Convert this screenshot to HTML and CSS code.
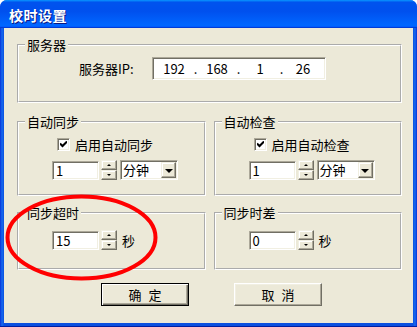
FILE: index.html
```html
<!DOCTYPE html>
<html lang="zh-CN">
<head>
    <meta charset="UTF-8">
    <title>校时设置</title>
    <link rel="stylesheet" href="styles.css">
</head>
<body>

    <div class="window">

        <div class="title-bar">
            <span class="title">校时设置</span>
        </div>

        <div class="client">

            <!-- 服务器地址 -->
            <fieldset class="group server">
                <legend>服务器</legend>
                <div class="ip-row">
                    <span class="ip-label">服务器IP:</span>
                    <div class="ip-box">
                        <span class="octet">192</span><span class="dot">.</span>
                        <span class="octet">168</span><span class="dot">.</span>
                        <span class="octet">1</span><span class="dot">.</span>
                        <span class="octet">26</span>
                    </div>
                </div>
            </fieldset>

            <!-- 自动同步 / 自动检查 -->
            <div class="pair">
                <fieldset class="group tall">
                    <legend>自动同步</legend>
                    <div class="check-row">
                        <span class="check">
                            <svg width="7" height="7" viewBox="0 0 7 7"><path d="M0 2.5 L2.5 5 L7 0.5" fill="none" stroke="#000" stroke-width="2"/></svg>
                        </span>
                        <span>启用自动同步</span>
                    </div>
                    <div class="spin-row">
                        <div class="field">1</div>
                        <div class="spin"><span class="up"></span><span class="down"></span></div>
                        <div class="combo"><span class="combo-text">分钟</span><span class="drop"></span></div>
                    </div>
                </fieldset>

                <fieldset class="group tall">
                    <legend>自动检查</legend>
                    <div class="check-row">
                        <span class="check">
                            <svg width="7" height="7" viewBox="0 0 7 7"><path d="M0 2.5 L2.5 5 L7 0.5" fill="none" stroke="#000" stroke-width="2"/></svg>
                        </span>
                        <span>启用自动检查</span>
                    </div>
                    <div class="spin-row">
                        <div class="field">1</div>
                        <div class="spin"><span class="up"></span><span class="down"></span></div>
                        <div class="combo"><span class="combo-text">分钟</span><span class="drop"></span></div>
                    </div>
                </fieldset>
            </div>

            <!-- 同步超时 / 同步时差 -->
            <div class="pair">
                <fieldset class="group short">
                    <legend>同步超时</legend>
                    <div class="spin-row low">
                        <div class="field">15</div>
                        <div class="spin"><span class="up"></span><span class="down"></span></div>
                        <span class="unit">秒</span>
                    </div>
                </fieldset>

                <fieldset class="group short">
                    <legend>同步时差</legend>
                    <div class="spin-row low">
                        <div class="field">0</div>
                        <div class="spin"><span class="up"></span><span class="down"></span></div>
                        <span class="unit">秒</span>
                    </div>
                </fieldset>
            </div>

            <div class="actions">
                <button class="btn default">确&nbsp;定</button>
                <button class="btn">取&nbsp;消</button>
            </div>
        </div>

        <!-- 红色圈注 -->
        <svg class="mark" width="417" height="327" viewBox="0 0 417 327">
            <ellipse cx="81.5" cy="237.5" rx="74" ry="41" fill="none" stroke="#f00" stroke-width="4"/>
        </svg>
    </div>

</body>
</html>
```

FILE: styles.css
```css
html {
    background: #fff;
}

body {
    margin: 0;
    font-family: "Noto Sans CJK SC", "DejaVu Sans", sans-serif;
    font-size: 13px;
    color: #000;
}

/* --- Ventana --- */
.window {
    position: relative;
    width: 417px;
    height: 327px;
    box-sizing: border-box;
    display: flex;
    flex-direction: column;
    padding: 0 4px 3px 4px;
    background: linear-gradient(to right, #0831d9 0, #166aee 2px, #0a50e0 4px, #0a50e0 calc(100% - 4px), #166aee calc(100% - 2px), #0831d9 100%);
    border-radius: 7px 7px 0 0;
    border-bottom: 1px solid #001ea0;
}

.title-bar {
    height: 28px;
    margin: 0 -4px;
    padding-left: 9px;
    display: flex;
    align-items: center;
    border-radius: 7px 7px 0 0;
    background: linear-gradient(180deg, #0997ff, #0053ee 8%, #0050ee 40%, #06f 88%, #06f 93%, #005bff 95%, #003dd7 96%, #003dd7);
}

.title {
    color: #fff;
    font-weight: 700;
    font-size: 14px;
    letter-spacing: 0.5px;
    line-height: 16px;
    text-shadow: 1px 1px 0 #0a1883;
    margin-top: 1px;
}

.client {
    flex: 1;
    background: #ece9d8;
    padding: 9px 11px 0 13px;
    display: flex;
    flex-direction: column;
}

/* --- Grupos --- */
.group {
    margin: 0;
    padding: 0;
    min-width: 0;
    box-sizing: border-box;
    border: 2px groove #fff;
}

.group legend {
    margin-left: 6px;
    padding: 0 2px;
    line-height: 16px;
}

.server {
    height: 66px;
}

.pair {
    display: grid;
    grid-template-columns: 1fr 1fr;
    gap: 8px;
}

.server + .pair {
    margin-top: 11px;
}

.pair + .pair {
    margin-top: 9px;
}

.tall {
    height: 82px;
}

.short {
    height: 65px;
}

/* --- IP --- */
.ip-row {
    display: flex;
    align-items: center;
    margin-top: 4px;
    padding-left: 60px;
}

.ip-label {
    width: 73px;
}

.ip-box {
    width: 174px;
    height: 23px;
    box-sizing: border-box;
    padding-left: 6px;
    display: flex;
    align-items: center;
    background: #fff;
    border: 1px solid;
    border-color: #aca899 #fff #fff #aca899;
    box-shadow: inset 1px 1px 0 #716f64, inset -1px -1px 0 #f1efe2;
}

.octet {
    width: 30px;
    text-align: center;
}

.dot {
    width: 13px;
    text-align: center;
}

/* --- Casilla --- */
.check-row {
    display: flex;
    align-items: center;
    gap: 5px;
    height: 16px;
    margin: 6px 0 0 38px;
}

.check {
    width: 13px;
    height: 13px;
    box-sizing: border-box;
    display: flex;
    align-items: center;
    justify-content: center;
    background: #fff;
    border: 1px solid;
    border-color: #aca899 #fff #fff #aca899;
    box-shadow: inset 1px 1px 0 #716f64, inset -1px -1px 0 #f1efe2;
}

/* --- Spin + combo --- */
.spin-row {
    display: flex;
    align-items: center;
    margin: 8px 0 0 33px;
    height: 20px;
}

.spin-row.low {
    margin-top: 9px;
}

.field {
    width: 47px;
    height: 19px;
    box-sizing: border-box;
    padding-left: 3px;
    line-height: 17px;
    background: #fff;
    border: 1px solid;
    border-color: #aca899 #fff #fff #aca899;
    box-shadow: inset 1px 1px 0 #716f64, inset -1px -1px 0 #f1efe2;
}

.spin {
    width: 16px;
    height: 20px;
    margin-left: 2px;
    display: flex;
    flex-direction: column;
}

.spin span {
    flex: 1;
    box-sizing: border-box;
    display: flex;
    align-items: center;
    justify-content: center;
    background: #ece9d8;
    border: 1px solid;
    border-color: #f1efe2 #716f64 #716f64 #f1efe2;
    box-shadow: inset -1px -1px 0 #aca899, inset 1px 1px 0 #fff;
}

.spin span::after {
    content: "";
    border-left: 2px solid transparent;
    border-right: 2px solid transparent;
}

.spin .up::after {
    border-bottom: 2px solid #000;
}

.spin .down::after {
    border-top: 2px solid #000;
}

.combo {
    width: 58px;
    height: 20px;
    margin-left: 3px;
    box-sizing: border-box;
    display: flex;
    align-items: center;
    justify-content: space-between;
    padding: 1px 1px 1px 2px;
    background: #fff;
    border: 1px solid;
    border-color: #aca899 #fff #fff #aca899;
    box-shadow: inset 1px 1px 0 #716f64, inset -1px -1px 0 #f1efe2;
}

.combo-text {
    line-height: 16px;
}

.drop {
    width: 15px;
    height: 16px;
    box-sizing: border-box;
    display: flex;
    align-items: center;
    justify-content: center;
    background: #ece9d8;
    border: 1px solid;
    border-color: #f1efe2 #716f64 #716f64 #f1efe2;
    box-shadow: inset -1px -1px 0 #aca899, inset 1px 1px 0 #fff;
}

.drop::after {
    content: "";
    border-left: 4px solid transparent;
    border-right: 4px solid transparent;
    border-top: 4px solid #000;
    margin-top: 1px;
}

.unit {
    margin-left: 5px;
}

/* --- Botones --- */
.actions {
    display: flex;
    justify-content: center;
    gap: 45px;
    margin-top: 13px;
    padding-left: 4px;
}

.btn {
    width: 88px;
    height: 23px;
    padding: 0;
    font-family: "Noto Sans CJK SC", sans-serif;
    font-size: 13px;
    word-spacing: 4px;
    color: #000;
    background: #ece9d8;
    border: 1px solid;
    border-color: #fff #716f64 #716f64 #fff;
    box-shadow: inset -1px -1px 0 #aca899, inset 1px 1px 0 #f1efe2;
}

.btn.default {
    border-color: #000;
    box-shadow: inset 1px 1px 0 #fff, inset -1px -1px 0 #716f64, inset -2px -2px 0 #aca899;
}

/* --- Marca roja --- */
.mark {
    position: absolute;
    left: 0;
    top: 0;
    pointer-events: none;
}
```
